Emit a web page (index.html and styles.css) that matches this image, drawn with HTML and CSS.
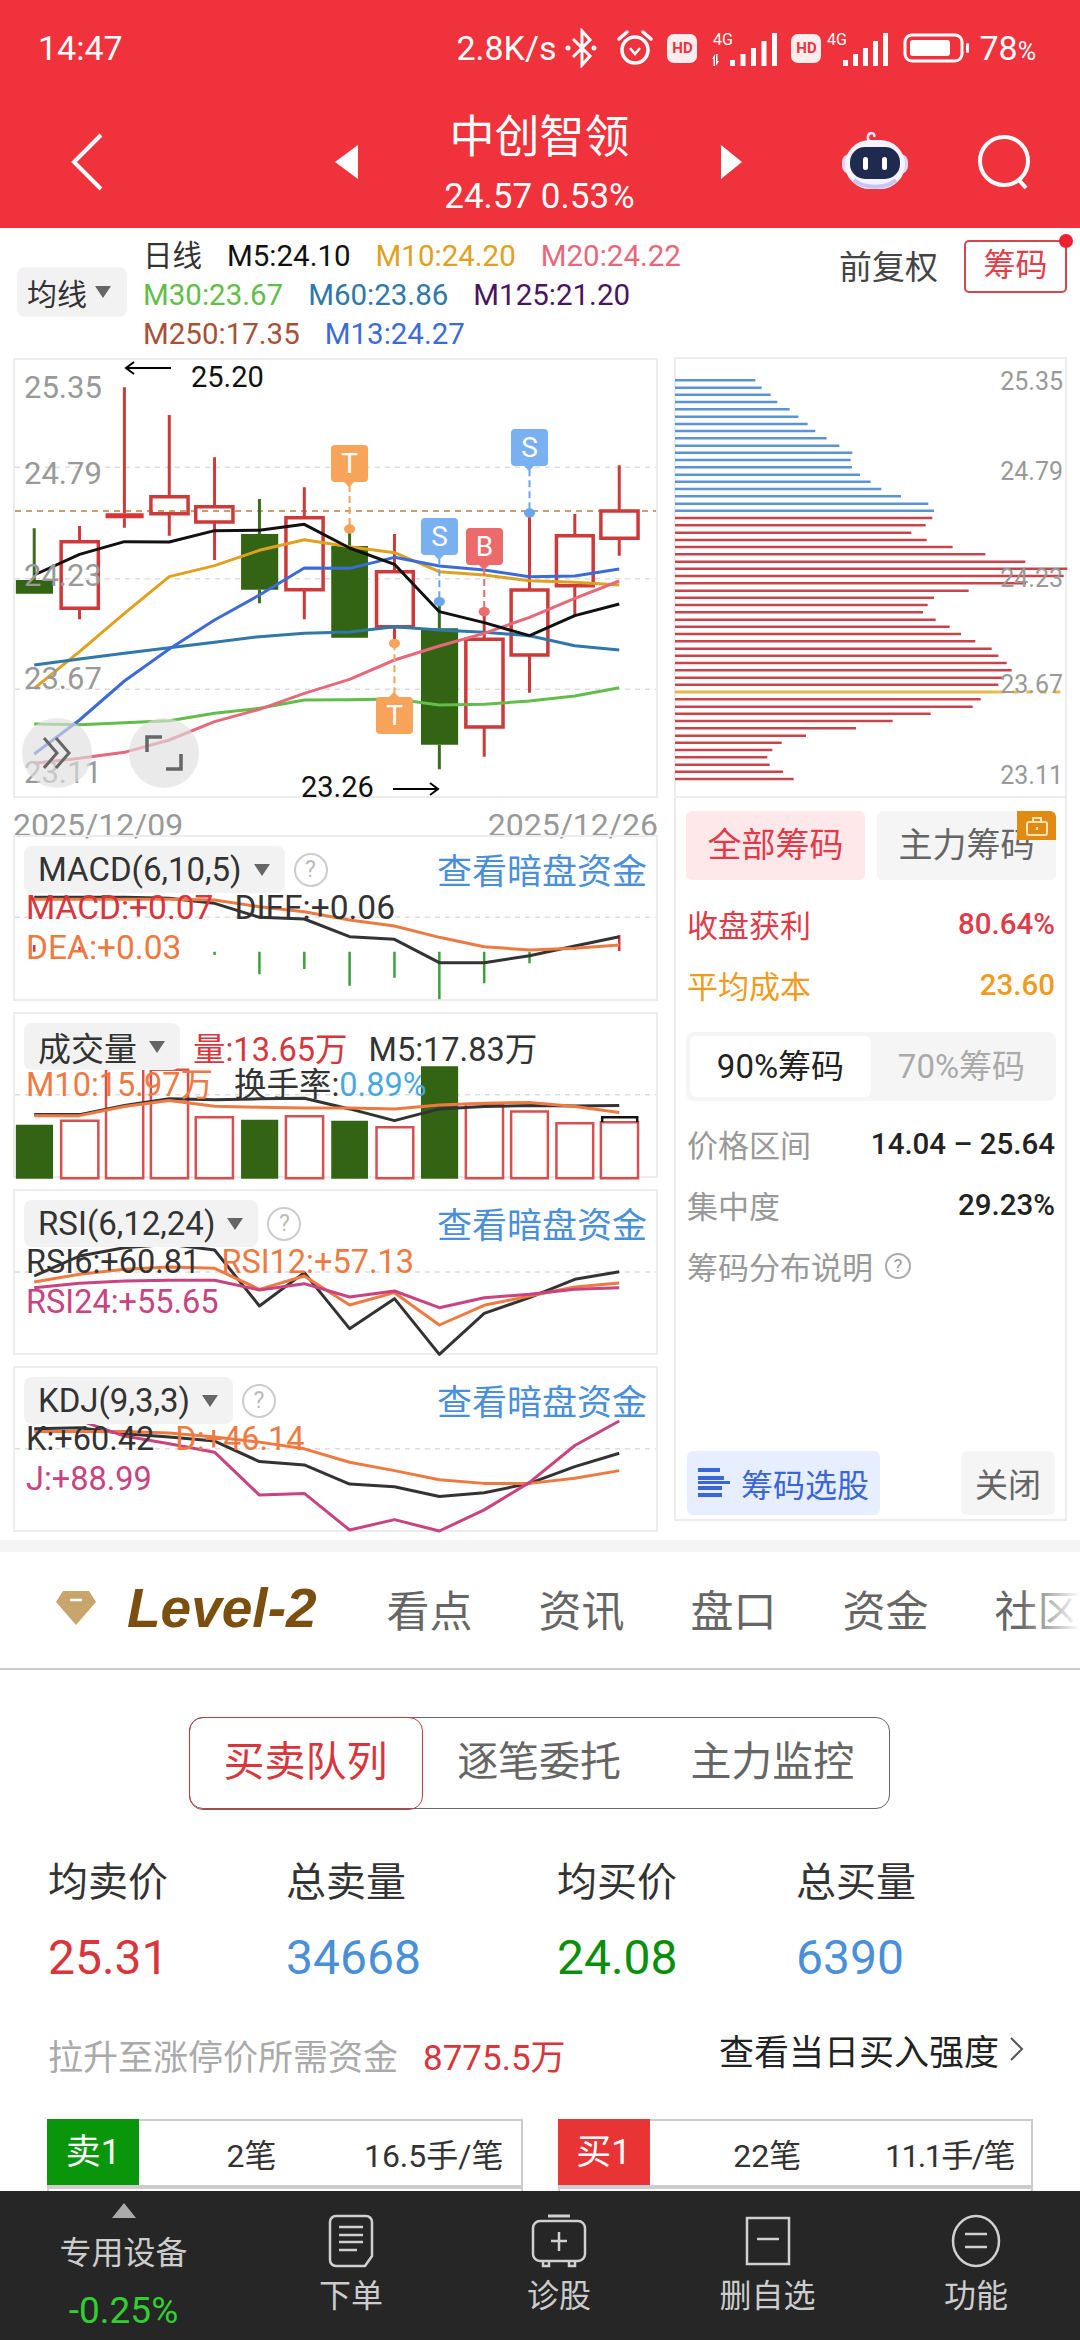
FILE: index.html
```html
<!DOCTYPE html>
<html lang="zh-CN">
<head>
    <meta charset="UTF-8">
    <meta name="viewport" content="width=device-width, initial-scale=1.0">
    <title>中创智领</title>
    <link rel="stylesheet" href="styles.css">
</head>
<body>
<div class="page">
    <header class="top">
        <div class="status">
            <span class="clock">14:47</span>
            <div class="status-right">
                <span>2.8K/s</span>
                <svg class="gap-s" width="32" height="40" viewBox="0 0 32 40" fill="none" stroke="#fff" stroke-width="3"><path d="M8 11l17 17-8 9V3l8 9L8 29"/><circle cx="3" cy="20" r="2.500" fill="#fff" stroke="none"/><circle cx="29" cy="20" r="2.500" fill="#fff" stroke="none"/></svg>
                <svg class="gap-l" width="36" height="40" viewBox="0 0 36 40" fill="none" stroke="#fff" stroke-width="3.500"><circle cx="18" cy="22" r="13"/><path d="M2 11l8-7M34 11l-8-7" stroke-linecap="round"/><path d="M13 20l5 6 5-6" stroke-width="2.500"/></svg>
                <span class="hd gap-m">HD</span>
                <svg class="gap-m" width="66" height="36" viewBox="0 0 66 36" fill="#fff"><text class="net" x="2" y="15">4G</text><path d="M19 36h5V30h-5zM29.500 36h5V24h-5zM40 36h5V18h-5zM50.500 36h5V11h-5zM61 36h5V3h-5z"/><path d="M1 29l3-5v12H2.500v-7zM8 31l-3 5V24h1.500v7z"/></svg>
                <span class="hd gap-m">HD</span>
                <svg class="gap-xs" width="62" height="36" viewBox="0 0 62 36" fill="#fff"><text class="net" x="0" y="15">4G</text><path d="M16 36h5V30h-5zM26 36h5V24h-5zM36 36h5V18h-5zM46 36h5V11h-5zM56 36h5V3h-5z"/></svg>
                <svg class="gap-m" width="67" height="30" viewBox="0 0 67 30" fill="none"><rect x="2" y="2" width="57" height="26" rx="7" stroke="#fff" stroke-width="3"/><rect x="7" y="7" width="40" height="16" rx="3" fill="#fff"/><rect x="63" y="10" width="3" height="10" rx="1.500" fill="#fff"/></svg>
                <span class="gap-s">78<small>%</small></span>
            </div>
        </div>
        <div class="nav">
            <svg class="nav-back" width="32" height="58" viewBox="0 0 32 58" fill="none" stroke="#fff" stroke-width="4"><path d="M30 2L3 29l27 27"/></svg>
            <i class="tri-left"></i>
            <div class="nav-title">
                <h1>中创智领</h1>
                <p>24.57 0.53%</p>
            </div>
            <i class="tri-right"></i>
            <svg class="nav-robot" width="66" height="60" viewBox="0 0 66 60"><path d="M28 12c-3-2-3-8 1-9 3 0 4 2 3 4" fill="none" stroke="#e8e6ff" stroke-width="2.500"/><rect x="0" y="24" width="66" height="20" rx="8" fill="#d9d6f5"/><rect x="3" y="10" width="60" height="49" rx="25" fill="#f4f3ff"/><path d="M12 50c10 9 32 9 42 0" fill="none" stroke="#c9c4f2" stroke-width="4"/><rect x="8" y="17" width="50" height="32" rx="15" fill="#1e2b4f"/><rect x="21" y="27" width="5" height="13" rx="2.500" fill="#fff"/><rect x="40" y="27" width="5" height="13" rx="2.500" fill="#fff"/></svg>
            <svg class="nav-search" width="56" height="56" viewBox="0 0 56 56" fill="none" stroke="#fff" stroke-width="4"><circle cx="27" cy="27" r="24"/><path d="M42 46l7 8"/></svg>
        </div>
    </header>

    <main class="content">
        <section class="toolbar">
            <div class="pill pill-ma">均线<i class="caret"></i></div>
            <div class="legend">
                <div class="legend-row"><span class="c-text">日线</span><span class="c-black">M5:24.10</span><span class="c-gold">M10:24.20</span><span class="c-pink">M20:24.22</span></div>
                <div class="legend-row"><span class="c-green">M30:23.67</span><span class="c-teal">M60:23.86</span><span class="c-purple">M125:21.20</span></div>
                <div class="legend-row"><span class="c-brown">M250:17.35</span><span class="c-blue">M13:24.27</span></div>
            </div>
            <span class="adjust">前复权</span>
            <span class="chip-btn">筹码</span>
        </section>

        <section class="charts">
            <div class="col-left">
                <div class="panel panel-kline">
                    <svg class="plot" viewBox="35 30 1500 1308" preserveAspectRatio="none">
                        <path class="grid" d="M35 352H1535M35 686H1535M35 1018H1535"/>
                        <path class="grid-last" d="M35 483H1535"/>
                        <path class="wick-g" d="M80 535V690M607 447V552M607 719V760M818 535V588M1028 757V835M1028 1184V1258"/>
                        <path class="wick-r" d="M186 528V575M186 775V808M291 112V490M291 505V533M396 195V440M396 491V557M502 322V470M502 516V630M712 412V503M712 719V808M923 552V665M923 830V880M1133 785V868M1133 1131V1220M1239 490V720M1239 915V1028M1345 492V557M1345 707V800M1449 346V483M1449 565V617"/>
                        <path class="body-g" d="M37 690H124V731H37zM564 552H651V719H564zM775 588H861V863H775zM985 835H1072V1184H985z"/>
                        <path class="body-r" d="M143 575H230V775H143zM353 440H440V491H353zM458 470H545V516H458zM669 503H756V719H669zM881 665H967V830H881zM1090 868H1177V1131H1090zM1196 720H1282V915H1196zM1302 557H1388V707H1302zM1406 483H1493V565H1406z"/>
                        <path class="body-solid" d="M247 490H336V505H247z"/>
                        <polyline class="ln ln-gold" points="80,1015 186,905 291,790 396,680 502,647 607,601 712,569 818,590 923,608 1028,665 1133,675 1239,692 1345,697 1449,705"/>
                        <polyline class="ln ln-teal" points="80,945 186,927 291,910 396,893 502,877 607,860 712,850 818,846 923,830 1028,840 1133,847 1239,857 1345,887 1449,900"/>
                        <polyline class="ln ln-green" points="80,1122 186,1124 291,1118 396,1112 502,1090 607,1075 712,1050 818,1049 923,1047 1028,1065 1133,1063 1239,1053 1345,1038 1449,1013"/>
                        <polyline class="ln ln-pink" points="80,1240 186,1225 291,1207 396,1170 502,1115 607,1078 712,1030 818,988 923,930 1028,888 1133,850 1239,802 1345,745 1449,693"/>
                        <polyline class="ln ln-blue" points="80,1212 186,1110 291,993 396,897 502,810 607,735 712,654 818,655 923,622 1028,648 1133,660 1239,680 1345,678 1449,657"/>
                        <polyline class="ln ln-black" points="80,675 186,613 291,575 396,576 502,542 607,541 712,523 818,594 923,643 1028,785 1133,818 1239,857 1345,797 1449,762"/>
                        <path class="dash dash-t" d="M818 405V537M923 880V1035"/>
                        <path class="dash dash-s" d="M1028 625V755M1239 358V489"/>
                        <path class="dash dash-b" d="M1133 654V785"/>
                        <ellipse class="dot-t" cx="818" cy="537" rx="13" ry="14"/>
                        <ellipse class="dot-t" cx="923" cy="880" rx="13" ry="14"/>
                        <ellipse class="dot-s" cx="1028" cy="755" rx="13" ry="14"/>
                        <ellipse class="dot-s" cx="1239" cy="489" rx="13" ry="14"/>
                        <ellipse class="dot-b" cx="1133" cy="785" rx="13" ry="14"/>
                    </svg>
                    <span class="axis ax1">25.35</span>
                    <span class="axis ax2">24.79</span>
                    <span class="axis ax3">24.23</span>
                    <span class="axis ax4">23.67</span>
                    <span class="axis ax5">23.11</span>
                    <span class="extreme ex-high">25.20</span>
                    <svg class="arrow ar-high" width="47" height="14" viewBox="0 0 47 14" fill="none" stroke="#000" stroke-width="2"><path d="M47 7H2M10 1L2 7l8 6"/></svg>
                    <span class="extreme ex-low">23.26</span>
                    <svg class="arrow ar-low" width="47" height="14" viewBox="0 0 47 14" fill="none" stroke="#000" stroke-width="2"><path d="M0 7h45M37 1l8 6-8 6"/></svg>
                    <span class="tag tag-t tag-1">T</span>
                    <span class="tag tag-s tag-2">S</span>
                    <span class="tag tag-b tag-3">B</span>
                    <span class="tag tag-s tag-4">S</span>
                    <span class="tag tag-t tag-up tag-5">T</span>
                    <span class="round-btn rb-1"><svg width="30" height="34" viewBox="0 0 30 34" fill="none" stroke="#666" stroke-width="3"><path d="M2 2l13 15L2 32M14 2l13 15-13 15"/></svg></span>
                    <span class="round-btn rb-2"><svg width="38" height="36" viewBox="0 0 38 36" fill="none" stroke="#666" stroke-width="3.500"><path d="M17 2H2v15M36 19v15H21"/></svg></span>
                </div>
                <div class="dates"><span>2025/12/09</span><span>2025/12/26</span></div>

                <div class="panel panel-sub">
                    <svg class="plot" viewBox="35 51 1500 486" preserveAspectRatio="none">
                        <path class="grid" d="M35 292H1535"/>
                        <path class="hist-g" d="M502 395V405M607 395V463M712 395V447M818 395V497M923 395V473M1028 395V538M1133 395V490M1239 395V430"/>
                        <path class="hist-r" d="M80 375V395M186 380V395M1345 378V390M1449 345V393"/>
                        <polyline class="ln ln-dark" points="80,232 186,232 291,232 396,235 502,250 607,292 712,297 818,350 923,358 1028,428 1133,428 1239,407 1345,378 1449,350"/>
                        <polyline class="ln ln-orange" points="80,238 186,238 291,238 396,238 502,240 607,260 712,275 818,300 923,318 1028,352 1133,380 1239,390 1345,385 1449,375"/>
                    </svg>
                    <div class="panel-head"><div class="pill">MACD(6,10,5)<i class="caret"></i></div><span class="help">?</span><a class="more">查看暗盘资金</a></div>
                    <div class="vals vals-wide"><span class="c-red">MACD:+0.07</span><span class="c-dark">DIFF:+0.06</span></div>
                    <div class="vals vals-wide"><span class="c-orange">DEA:+0.03</span></div>
                </div>

                <div class="panel panel-sub panel-vol">
                    <svg class="plot" viewBox="35 582 1500 483" preserveAspectRatio="none">
                        <path class="grid" d="M35 823H1535"/>
                        <path class="body-g" d="M37 912H124V1073H37zM564 897H651V1073H564zM775 900H861V1073H775zM985 738H1072V1073H985z"/>
                        <path class="vol-r" d="M143 900H230V1072H143zM248 740H335V1072H248zM353 748H440V1072H353zM458 890H545V1072H458zM669 887H756V1072H669zM881 920H967V1072H881zM1090 850H1177V1072H1090zM1196 873H1282V1072H1196zM1302 908H1388V1072H1302zM1406 905H1493V1072H1406z"/>
                        <path class="cap" d="M1409 905V890H1491V905"/>
                        <polyline class="ln ln-dark" points="80,882 186,882 291,855 396,835 502,838 607,835 712,833 818,865 923,900 1028,865 1133,858 1239,855 1345,856 1449,855"/>
                        <polyline class="ln ln-orange" points="80,885 186,885 291,858 396,840 502,857 607,860 712,862 818,862 923,865 1028,853 1133,848 1239,846 1345,858 1449,876"/>
                    </svg>
                    <div class="panel-head"><div class="pill">成交量<i class="caret"></i></div><span class="vol-now c-red">量:13.65万</span><span class="vol-m5 c-dark">M5:17.83万</span></div>
                    <div class="vals"><span class="c-orange">M10:15.97万</span><span class="c-dark">换手率:<b class="c-sky">0.89%</b></span></div>
                </div>

                <div class="panel panel-sub">
                    <svg class="plot" viewBox="35 30 1500 486" preserveAspectRatio="none">
                        <path class="grid" d="M35 273H1535"/>
                        <polyline class="ln ln-dark" points="80,285 186,225 291,200 396,190 502,207 607,375 712,275 818,443 923,353 1028,520 1133,397 1239,350 1345,295 1449,272"/>
                        <polyline class="ln ln-orange" points="80,303 186,280 291,265 396,258 502,262 607,325 712,285 818,372 923,335 1028,432 1133,373 1239,345 1345,318 1449,306"/>
                        <polyline class="ln ln-magenta" points="80,320 186,307 291,300 396,298 502,298 607,327 712,308 818,348 923,330 1028,380 1133,350 1239,340 1345,325 1449,320"/>
                    </svg>
                    <div class="panel-head"><div class="pill">RSI(6,12,24)<i class="caret"></i></div><span class="help">?</span><a class="more">查看暗盘资金</a></div>
                    <div class="vals"><span class="c-dark">RSI6:+60.81</span><span class="c-orange">RSI12:+57.13</span></div>
                    <div class="vals"><span class="c-magenta">RSI24:+55.65</span></div>
                </div>

                <div class="panel panel-sub">
                    <svg class="plot" viewBox="35 564 1500 483" preserveAspectRatio="none">
                        <path class="grid" d="M35 805H1535"/>
                        <polyline class="ln ln-dark" points="80,745 186,742 291,760 396,770 502,782 607,843 712,853 818,910 923,918 1028,947 1133,936 1239,908 1345,858 1449,818"/>
                        <polyline class="ln ln-orange" points="80,753 186,753 291,753 396,758 502,770 607,785 712,805 818,845 923,870 1028,897 1133,908 1239,908 1345,893 1449,870"/>
                        <polyline class="ln ln-magenta" points="80,720 186,720 291,767 396,790 502,815 607,943 712,938 818,1047 923,1016 1028,1050 1133,987 1239,905 1345,795 1449,722"/>
                    </svg>
                    <div class="panel-head"><div class="pill">KDJ(9,3,3)<i class="caret"></i></div><span class="help">?</span><a class="more">查看暗盘资金</a></div>
                    <div class="vals"><span class="c-dark">K:+60.42</span><span class="c-orange">D:+46.14</span></div>
                    <div class="vals"><span class="c-magenta">J:+88.99</span></div>
                </div>
            </div>

            <div class="col-right">
                <div class="panel panel-chips">
                    <svg class="plot" viewBox="18 27 1167 1311" preserveAspectRatio="none">
                        <path class="bar-blue" d="M15 91H256M15 113H275M15 134H302M15 156H322M15 178H359M15 200H385M15 222H413M15 243H436M15 265H470M15 287H508M15 308H547M15 330H542M15 352H546M15 374H570M15 395H602M15 417H634M15 439H693M15 461H775M15 482H792"/>
                        <path class="bar-red" d="M15 504H787M15 526H767M15 548H724M15 570H770M15 591H848M15 613H946M15 635H1066M15 656H1192M15 678H1181M15 700H1068M15 722H896M15 743H792M15 765H773M15 787H759M15 809H797M15 830H839M15 852H873M15 874H916M15 896H965M15 917H985M15 939H1010M15 961H1025M15 983H1000M15 1004H985M15 1048H932M15 1070H908M15 1091H782M15 1113H668M15 1135H558M15 1157H408M15 1178H335M15 1200H307M15 1222H292M15 1244H299M15 1265H339M15 1287H371"/>
                        <path class="bar-gold" d="M15 1026H985"/>
                        <path class="bar-gold bar-dash" d="M985 1026H1192"/>
                    </svg>
                    <span class="axis-r ar1">25.35</span>
                    <span class="axis-r ar2">24.79</span>
                    <span class="axis-r ar3">24.23</span>
                    <span class="axis-r ar4">23.67</span>
                    <span class="axis-r ar5">23.11</span>
                </div>
                <div class="info">
                    <div class="info-tabs">
                        <span class="info-tab info-tab-on">全部筹码</span>
                        <span class="info-tab">主力筹码<i class="lock"><svg width="24" height="20" viewBox="0 0 24 20" fill="none" stroke="#ffe2b0" stroke-width="2"><rect x="2" y="6" width="20" height="13" rx="2"/><path d="M8 6V2h8v4M12 11v3"/></svg></i></span>
                    </div>
                    <div class="info-row c-profit"><span>收盘获利</span><b>80.64%</b></div>
                    <div class="info-row c-cost"><span>平均成本</span><b>23.60</b></div>
                    <div class="seg-mini"><span class="seg-mini-on">90%筹码</span><span>70%筹码</span></div>
                    <div class="info-row info-row-first"><span class="c-muted">价格区间</span><b>14.04 – 25.64</b></div>
                    <div class="info-row"><span class="c-muted">集中度</span><b>29.23%</b></div>
                    <div class="info-row info-note"><span class="c-muted">筹码分布说明</span><span class="help help-sm">?</span></div>
                    <div class="info-btns">
                        <span class="btn-pick"><svg width="32" height="30" viewBox="0 0 32 30" fill="#3a66d8"><path d="M0 0h22v4H0zM0 8h26v4H0zM0 13h32v3H0zM0 18h24v4H0zM0 25h24v4H0z"/></svg>筹码选股</span>
                        <span class="btn-close">关闭</span>
                    </div>
                </div>
            </div>
        </section>

        <div class="band"></div>

        <nav class="tabs">
            <span class="tab-level">
                <svg width="40" height="34" viewBox="0 0 40 34"><path d="M7 0h26l7 11-20 23L0 11z" fill="#c9a56e"/><path d="M14 9h12" stroke="#fff" stroke-width="2.500"/></svg>
                <b>Level-2</b>
            </span>
            <span>看点</span>
            <span>资讯</span>
            <span>盘口</span>
            <span>资金</span>
            <span>社区</span>
        </nav>

        <div class="segment">
            <span class="segment-on">买卖队列</span>
            <span>逐笔委托</span>
            <span>主力监控</span>
        </div>

        <div class="stats">
            <div><p>均卖价</p><strong class="c-red">25.31</strong></div>
            <div><p>总卖量</p><strong class="c-link">34668</strong></div>
            <div><p>均买价</p><strong class="c-buy">24.08</strong></div>
            <div><p>总买量</p><strong class="c-link">6390</strong></div>
        </div>

        <div class="limit">
            <span class="limit-label">拉升至涨停价所需资金</span>
            <span class="limit-value">8775.5万</span>
            <span class="limit-link">查看当日买入强度<svg width="15" height="24" viewBox="0 0 15 24" fill="none" stroke="#555" stroke-width="2"><path d="M2 1l11 11L2 23"/></svg></span>
        </div>

        <div class="book">
            <div class="book-col">
                <div class="book-row"><span class="book-head head-sell">卖1</span><span class="book-count">2笔</span><span class="book-avg">16.5手/笔</span></div>
                <div class="book-row"></div>
            </div>
            <div class="book-col">
                <div class="book-row"><span class="book-head head-buy">买1</span><span class="book-count">22笔</span><span class="book-avg book-avg-tight">11.1手/笔</span></div>
                <div class="book-row"></div>
            </div>
        </div>
    </main>

    <footer class="bottom">
        <div class="sector">
            <i class="tri-up"></i>
            <span class="sector-name">专用设备</span>
            <span class="sector-change">-0.25%</span>
        </div>
        <div class="action">
            <svg width="46" height="54" viewBox="0 0 46 54" fill="none" stroke="#d0d0d0" stroke-width="2.500"><path d="M8 2h30a6 6 0 0 1 6 6v34l-7 10H8a6 6 0 0 1-6-6V8a6 6 0 0 1 6-6z"/><path d="M11 13h24M11 21h24M11 28h24M11 36h18"/></svg>
            <span>下单</span>
        </div>
        <div class="action">
            <svg width="56" height="54" viewBox="0 0 56 54" fill="none" stroke="#d0d0d0" stroke-width="2.500"><path d="M17 2h22" stroke-width="3"/><rect x="2" y="7" width="52" height="40" rx="7"/><path d="M28 18v19M20 27h16M12 47v5h6v-5M38 47v5h6v-5"/></svg>
            <span>诊股</span>
        </div>
        <div class="action">
            <svg width="46" height="54" viewBox="0 0 46 54" fill="none" stroke="#d0d0d0" stroke-width="2.500"><rect x="2" y="4" width="42" height="46"/><path d="M12 25h22"/></svg>
            <span>删自选</span>
        </div>
        <div class="action">
            <svg width="50" height="54" viewBox="0 0 50 54" fill="none" stroke="#d0d0d0" stroke-width="2.500"><ellipse cx="25" cy="27" rx="23" ry="25"/><path d="M14 20h22M14 33h22"/></svg>
            <span>功能</span>
        </div>
    </footer>
</div>
</body>
</html>
```

FILE: styles.css
```css
* {
    box-sizing: border-box;
}
body {
    margin: 0;
    background: #fff;
    font-family: Roboto, "Noto Sans CJK SC", sans-serif;
    color: #222;
}
p, h1 {
    margin: 0;
    font-weight: normal;
}
i {
    font-style: normal;
}
.page {
    width: 1080px;
    height: 2340px;
    display: flex;
    flex-direction: column;
    overflow: hidden;
}

/* red header */
.top {
    height: 228px;
    flex: none;
    background: #ef323b;
    color: #fff;
}
.status {
    height: 96px;
    display: flex;
    align-items: center;
    justify-content: space-between;
    padding: 0 44px 0 38px;
    font-size: 34px;
}
.status-right {
    display: flex;
    align-items: center;
}
.status-right small {
    font-size: 25px;
}
.gap-xs { margin-left: 6px; }
.gap-s { margin-left: 9px; }
.gap-m { margin-left: 14px; }
.gap-l { margin-left: 20px; }
.hd {
    width: 30px;
    height: 29px;
    border-radius: 7px;
    background: #ffecec;
    color: #ef323b;
    font-size: 15px;
    font-weight: 700;
    line-height: 29px;
    text-align: center;
}
.net {
    font-family: Roboto, sans-serif;
    font-size: 16px;
}
.nav {
    height: 132px;
    display: flex;
    align-items: center;
    padding-left: 71px;
}
.nav-back {
    margin-top: -60px;
    margin-right: 232px;
    transform: translateY(30px);
}
.tri-left, .tri-right {
    width: 0;
    height: 0;
    border-top: 17px solid transparent;
    border-bottom: 17px solid transparent;
}
.tri-left {
    border-right: 23px solid #fff;
}
.tri-right {
    border-left: 21px solid #fff;
}
.nav-title {
    width: 363px;
    margin-top: 4px;
    text-align: center;
}
.nav-title h1 {
    font-size: 45px;
    line-height: 60px;
}
.nav-title p {
    font-size: 35px;
    line-height: 46px;
    margin-top: 6px;
}
.nav-robot {
    margin-left: 100px;
    margin-top: -4px;
}
.nav-search {
    margin-left: 69px;
}

/* ma legend row */
.content {
    flex: 1;
    min-height: 0;
    overflow: hidden;
}
.toolbar {
    height: 130px;
    display: flex;
    align-items: flex-start;
    padding: 0 13px 0 17px;
}
.pill {
    height: 47px;
    display: inline-flex;
    align-items: center;
    padding: 0 15px 0 14px;
    border-radius: 8px;
    background: #f2f2f2;
    font-size: 33px;
    color: #333;
    white-space: nowrap;
}
.caret {
    width: 0;
    height: 0;
    margin-left: 12px;
    border-left: 8px solid transparent;
    border-right: 8px solid transparent;
    border-top: 12px solid #666;
}
.pill-ma {
    width: 110px;
    height: 50px;
    margin-top: 39px;
    padding: 0 0 0 10px;
    font-size: 30px;
}
.pill-ma .caret {
    margin-left: 8px;
}
.legend {
    margin-left: 16px;
    padding-top: 9px;
    font-size: 29.5px;
}
.legend-row {
    display: flex;
    gap: 25px;
    line-height: 39px;
}
.c-text { color: #333; }
.c-black { color: #111; }
.c-gold { color: #e0a020; }
.c-pink { color: #e8687a; }
.c-green { color: #62bd4a; }
.c-teal { color: #2f78a8; }
.c-purple { color: #4a1560; }
.c-brown { color: #a8503a; }
.c-blue { color: #3c6bd8; }
.adjust {
    margin-left: auto;
    margin-top: 16px;
    font-size: 33px;
    line-height: 48px;
    color: #444;
}
.chip-btn {
    position: relative;
    width: 103px;
    height: 53px;
    margin-left: 26px;
    margin-top: 12px;
    border: 2px solid #d8434c;
    border-radius: 5px;
    color: #e0404a;
    font-size: 32px;
    line-height: 47px;
    text-align: center;
}
.chip-btn::after {
    content: "";
    position: absolute;
    top: -8px;
    right: -8px;
    width: 14px;
    height: 14px;
    border-radius: 50%;
    background: #ef2030;
}

/* chart columns */
.charts {
    display: flex;
    align-items: flex-start;
    gap: 16px;
    padding: 0 13px;
}
.col-left {
    width: 645px;
}
.col-right {
    width: 393px;
    margin-top: -1px;
}
.panel {
    position: relative;
    border: 2px solid #ececec;
}
.plot {
    position: absolute;
    left: 0;
    top: 0;
    width: 100%;
    height: 100%;
    overflow: visible;
}
.plot * {
    vector-effect: non-scaling-stroke;
    fill: none;
}
.panel-kline {
    height: 440px;
}
.grid {
    stroke: #ddd;
    stroke-width: 1.5;
    stroke-dasharray: 5 5;
}
.grid-last {
    stroke: #c8a070;
    stroke-width: 2;
    stroke-dasharray: 6 5;
}
.wick-g {
    stroke: #3d6b20;
    stroke-width: 3;
}
.wick-r {
    stroke: #cc3a3a;
    stroke-width: 3;
}
.plot .body-g {
    fill: #336414;
}
.body-r {
    stroke: #cc3a3a;
    stroke-width: 3.5;
}
.vol-r {
    stroke: #d65050;
    stroke-width: 2.5;
}
.plot .body-solid {
    fill: #dc3232;
}
.cap {
    stroke: #111;
    stroke-width: 2.5;
}
.hist-g {
    stroke: #3ea03a;
    stroke-width: 2.5;
}
.hist-r {
    stroke: #d8363c;
    stroke-width: 2.5;
}
.ln {
    stroke-width: 3;
    stroke-linejoin: round;
}
.ln-gold { stroke: #e0a020; }
.ln-teal { stroke: #2f78a8; }
.ln-green { stroke: #62bd4a; }
.ln-pink { stroke: #e8687a; }
.ln-blue { stroke: #3c6bd8; }
.ln-black { stroke: #111; }
.ln-dark { stroke: #333; }
.ln-orange { stroke: #ee7a42; }
.ln-magenta { stroke: #c8437f; }
.dash {
    stroke-width: 2;
    stroke-dasharray: 7 4;
}
.dash-t { stroke: #f5a25a; }
.dash-s { stroke: #6aa6ea; }
.dash-b { stroke: #ec6a6a; }
.plot .dot-t { fill: #f5a25a; }
.plot .dot-s { fill: #6aa6ea; }
.plot .dot-b { fill: #ec6a6a; }
.axis, .axis-r {
    position: absolute;
    color: #999;
    font-size: 31px;
    line-height: 36px;
}
.axis { left: 9px; }
.ax1 { top: 10px; }
.ax2 { top: 96px; }
.ax3 { top: 198px; }
.ax4 { top: 301px; }
.ax5 { top: 395px; }
.axis-r {
    right: 2px;
    font-size: 25px;
    line-height: 30px;
}
.ar1 { top: 8px; }
.ar2 { top: 98px; }
.ar3 { top: 205px; }
.ar4 { top: 311px; }
.ar5 { top: 402px; }
.extreme {
    position: absolute;
    font-size: 29px;
    line-height: 34px;
    color: #111;
}
.ex-high { left: 176px; top: 0; }
.ex-low { left: 286px; top: 410px; }
.arrow {
    position: absolute;
}
.ar-high { left: 109px; top: 1px; }
.ar-low { left: 378px; top: 422px; }
.tag {
    position: absolute;
    width: 37px;
    height: 37px;
    border-radius: 4px;
    color: #fff;
    font-size: 28px;
    line-height: 37px;
    text-align: center;
}
.tag::after {
    content: "";
    position: absolute;
    left: 13px;
    top: 37px;
    border-left: 5px solid transparent;
    border-right: 5px solid transparent;
    border-top: 5px solid var(--tag-bg);
}
.tag-up::after {
    top: -5px;
    border-top: 0;
    border-bottom: 5px solid var(--tag-bg);
}
.tag-t { background: #f8a35a; --tag-bg: #f8a35a; }
.tag-s { background: #78b0f0; --tag-bg: #78b0f0; }
.tag-b { background: #ec6a6a; --tag-bg: #ec6a6a; }
.tag-1 { left: 316px; top: 85px; }
.tag-2 { left: 406px; top: 158px; }
.tag-3 { left: 451px; top: 168px; }
.tag-4 { left: 496px; top: 69px; }
.tag-5 { left: 361px; top: 337px; }
.round-btn {
    position: absolute;
    top: 358px;
    width: 70px;
    height: 70px;
    display: flex;
    align-items: center;
    justify-content: center;
    border-radius: 50%;
    background: rgba(222, 222, 222, 0.65);
}
.rb-1 { left: 7px; }
.rb-2 { left: 114px; }
.dates {
    height: 37px;
    display: flex;
    justify-content: space-between;
    color: #999;
    font-size: 32px;
    line-height: 54px;
    white-space: nowrap;
}

/* indicator panels */
.panel-sub {
    height: 166px;
    margin-bottom: 11px;
    padding: 9px 0 0 9px;
}
.panel-sub:last-child {
    margin-bottom: 0;
}
.panel-head {
    position: relative;
    display: flex;
    align-items: center;
    height: 47px;
}
.help {
    width: 34px;
    height: 34px;
    margin-left: 9px;
    border: 2.5px solid #ccc;
    border-radius: 50%;
    color: #bbb;
    font-size: 23px;
    line-height: 29px;
    text-align: center;
}
.more {
    margin-left: auto;
    margin-right: 9px;
    margin-top: -3px;
    color: #4a8fd8;
    font-size: 35px;
    white-space: nowrap;
}
.vals {
    position: relative;
    display: flex;
    gap: 21px;
    padding-left: 2px;
    font-size: 32.5px;
    line-height: 40px;
    white-space: nowrap;
}
.vals-wide {
    font-size: 33.5px;
}
.panel-head + .vals {
    margin-top: -5px;
}
.vals b {
    font-weight: normal;
}
.vol-now {
    margin-left: 13px;
    font-size: 32.5px;
}
.vol-m5 {
    margin-left: 21px;
    font-size: 32.5px;
}
.c-red { color: #d8363c; }
.c-dark { color: #333; }
.c-orange { color: #ee7a42; }
.c-sky { color: #4aa8e0; }
.c-magenta { color: #c8437f; }

/* chip distribution */
.panel-chips {
    height: 441px;
}
.bar-blue, .bar-red, .bar-gold {
    stroke-width: 2.5;
}
.bar-blue { stroke: #5b94d6; }
.bar-red { stroke: #c8444a; }
.bar-gold { stroke: #e8b84a; stroke-width: 3; }
.bar-dash { stroke-dasharray: 6 8; }
.info {
    height: 723px;
    display: flex;
    flex-direction: column;
    padding: 13px 9px 4px 10px;
    border: 2px solid #ececec;
    border-top: 0;
}
.info-tabs {
    display: flex;
    gap: 12px;
    height: 69px;
    flex: none;
}
.info-tab {
    position: relative;
    flex: 1;
    border-radius: 6px;
    background: #f5f5f5;
    color: #666;
    font-size: 34px;
    line-height: 69px;
    text-align: center;
}
.info-tab-on {
    background: #ffe8ea;
    color: #e23a48;
}
.lock {
    position: absolute;
    top: 0;
    right: 0;
    width: 39px;
    height: 29px;
    display: flex;
    align-items: center;
    justify-content: center;
    border-radius: 0 6px 0 0;
    background: #e08a14;
}
.info-row {
    display: flex;
    align-items: center;
    justify-content: space-between;
    height: 61px;
    flex: none;
    padding: 0 1px;
    font-size: 31px;
}
.info-row b {
    font-weight: 500;
    font-size: 29.5px;
}
.info-tabs + .info-row {
    margin-top: 13px;
}
.c-profit { color: #e23a48; }
.c-cost { color: #f09a20; }
.c-muted { color: #999; }
.seg-mini {
    display: flex;
    height: 69px;
    flex: none;
    margin-top: 17px;
    padding: 4px;
    border-radius: 8px;
    background: #f5f5f5;
    color: #aaa;
    font-size: 33px;
    line-height: 61px;
    text-align: center;
}
.seg-mini span {
    flex: 1;
}
.seg-mini .seg-mini-on {
    flex: none;
    width: 181px;
    border-radius: 6px;
    background: #fff;
    color: #222;
}
.info-row-first {
    margin-top: 12px;
}
.info-note {
    justify-content: flex-start;
}
.help-sm {
    width: 26px;
    height: 26px;
    margin-left: 12px;
    border-width: 2px;
    font-size: 18px;
    line-height: 22px;
    color: #999;
    border-color: #aaa;
}
.info-btns {
    display: flex;
    justify-content: space-between;
    margin-top: auto;
    padding: 0 1px;
}
.btn-pick, .btn-close {
    height: 64px;
    display: flex;
    align-items: center;
    justify-content: center;
    border-radius: 6px;
    font-size: 32px;
}
.btn-pick {
    width: 193px;
    gap: 11px;
    background: #e6eeff;
    color: #3a66d8;
}
.btn-close {
    width: 94px;
    background: #f5f5f5;
    color: #666;
    font-size: 33px;
}
.band {
    height: 12px;
    margin-top: 8px;
    background: #f5f5f5;
}

/* tab strip */
.tabs {
    position: relative;
    height: 118px;
    display: flex;
    align-items: center;
    gap: 66px;
    padding-left: 56px;
    padding-bottom: 4px;
    border-bottom: 2px solid #ccc;
    color: #666;
    font-size: 43px;
    white-space: nowrap;
    overflow: hidden;
}
.tabs::after {
    content: "";
    position: absolute;
    top: 0;
    bottom: 0;
    right: 0;
    width: 60px;
    background: linear-gradient(to right, rgba(255, 255, 255, 0), #fff);
}
.tab-level {
    position: relative;
    display: flex;
    align-items: center;
    gap: 31px;
    margin-right: 4px;
}
.tab-level::after {
    content: "";
    position: absolute;
    left: 138px;
    bottom: -46px;
    width: 58px;
    height: 12px;
    border-radius: 6px;
    background: #f83a34;
}
.tab-level b {
    color: #7a4f10;
    font-family: "Liberation Sans", sans-serif;
    font-size: 55px;
    font-style: italic;
    font-weight: 700;
    line-height: 60px;
}
.segment {
    width: 701px;
    height: 92px;
    display: flex;
    margin: 47px 0 0 189px;
    border: 1.5px solid #666;
    border-radius: 14px;
    color: #666;
    font-size: 41px;
    line-height: 89px;
    text-align: center;
}
.segment span {
    flex: 1;
}
.segment .segment-on {
    flex: none;
    width: 234px;
    margin: -1.5px 0 -1.5px -1.5px;
    border: 1.5px solid #c8383c;
    border-radius: 14px;
    color: #d8363c;
}

/* order stats */
.stats {
    display: grid;
    grid-template-columns: 238px 271px 239px 1fr;
    margin-top: 49px;
    padding-left: 48px;
}
.stats p {
    font-size: 40px;
    line-height: 50px;
    color: #333;
}
.stats strong {
    display: block;
    margin-top: 20px;
    font-size: 48px;
    font-weight: normal;
    line-height: 60px;
}
.c-link { color: #4a8fd8; }
.c-buy { color: #0a8f0a; }
.limit {
    display: flex;
    align-items: center;
    height: 50px;
    margin-top: 41px;
    padding-left: 48px;
    font-size: 35px;
    white-space: nowrap;
}
.limit-label {
    color: #aaa;
}
.limit-value {
    margin-left: 25px;
    color: #d8363c;
}
.limit-link {
    display: flex;
    align-items: center;
    gap: 10px;
    margin-left: auto;
    margin-right: 56px;
    margin-bottom: 10px;
    color: #222;
}
.book {
    display: flex;
    gap: 35px;
    margin-top: 40px;
    padding: 0 47px;
}
.book-col {
    flex: 1;
}
.book-row {
    height: 68px;
    display: grid;
    grid-template-columns: 90px 1fr auto;
    align-items: center;
    padding-right: 17px;
    border: 2px solid #ccc;
    border-bottom-width: 2px;
    font-size: 32px;
    color: #333;
}
.book-count {
    text-align: center;
}
.book-avg-tight {
    letter-spacing: -1.5px;
}
.book-head {
    height: 66px;
    margin: -2px 0 0 -2px;
    color: #fff;
    font-size: 35px;
    line-height: 68px;
    text-align: center;
}
.head-sell { background: #0a960a; }
.head-buy { background: #e83434; }

/* bottom bar */
.bottom {
    height: 149px;
    flex: none;
    display: grid;
    grid-template-columns: 247px 208px 208px 209px 208px;
    background: #262626;
    color: #ccc;
    font-size: 32px;
}
.sector, .action {
    display: flex;
    flex-direction: column;
    align-items: center;
}
.sector {
    padding-top: 12px;
}
.tri-up {
    width: 0;
    height: 0;
    border-left: 12px solid transparent;
    border-right: 12px solid transparent;
    border-bottom: 15px solid #aaa;
}
.sector-name {
    margin-top: 12px;
    line-height: 46px;
}
.sector-change {
    margin-top: 12px;
    color: #2fd02f;
    font-size: 37px;
    line-height: 46px;
}
.action {
    padding-top: 23px;
}
.action span {
    margin-top: 5px;
    line-height: 46px;
}
```
